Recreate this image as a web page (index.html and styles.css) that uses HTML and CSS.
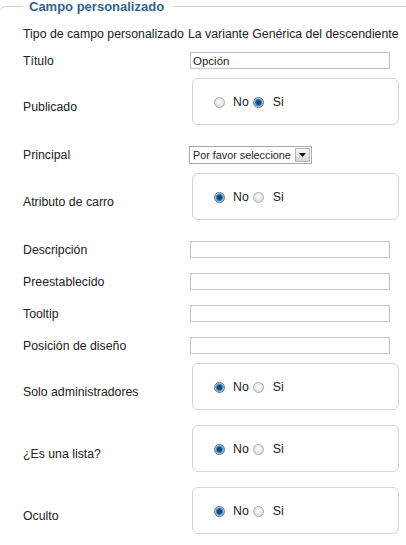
FILE: index.html
```html
<!DOCTYPE html>
<html lang="es">
<head>
  <meta charset="UTF-8">
  <title>Campo personalizado</title>
  <link rel="stylesheet" href="styles.css">
</head>
<body>

  <fieldset class="panel">
    <legend>Campo personalizado</legend>
    <div class="rows">

      <div class="row row-info">
        <span class="label">Tipo de campo personalizado</span>
        <span class="value">La variante Genérica del descendiente</span>
      </div>

      <div class="row">
        <label class="label" for="titulo">Título</label>
        <input class="text" id="titulo" value="Opción">
      </div>

      <div class="row row-radio">
        <span class="label">Publicado</span>
        <div class="choice">
          <input type="radio" name="publicado" id="pub0"><label for="pub0">No</label>
          <input type="radio" name="publicado" id="pub1" checked><label for="pub1">Si</label>
        </div>
      </div>

      <div class="row">
        <span class="label">Principal</span>
        <div class="select">
          <span>Por favor seleccione</span>
          <span class="arrow">
            <svg width="7" height="4" viewBox="0 0 7 4"><path d="M0 0h7L3.5 4z" fill="#111"/></svg>
          </span>
        </div>
      </div>

      <div class="row row-radio">
        <span class="label">Atributo de carro</span>
        <div class="choice">
          <input type="radio" name="carro" id="car0" checked><label for="car0">No</label>
          <input type="radio" name="carro" id="car1"><label for="car1">Si</label>
        </div>
      </div>

      <div class="row">
        <label class="label" for="desc">Descripción</label>
        <input class="text" id="desc">
      </div>

      <div class="row">
        <label class="label" for="pre">Preestablecido</label>
        <input class="text" id="pre">
      </div>

      <div class="row">
        <label class="label" for="tip">Tooltip</label>
        <input class="text" id="tip">
      </div>

      <div class="row">
        <label class="label" for="pos">Posición de diseño</label>
        <input class="text" id="pos">
      </div>

      <div class="row row-radio">
        <span class="label">Solo administradores</span>
        <div class="choice">
          <input type="radio" name="admin" id="adm0" checked><label for="adm0">No</label>
          <input type="radio" name="admin" id="adm1"><label for="adm1">Si</label>
        </div>
      </div>

      <div class="row row-radio">
        <span class="label">¿Es una lista?</span>
        <div class="choice">
          <input type="radio" name="lista" id="lis0" checked><label for="lis0">No</label>
          <input type="radio" name="lista" id="lis1"><label for="lis1">Si</label>
        </div>
      </div>

      <div class="row row-radio">
        <span class="label">Oculto</span>
        <div class="choice">
          <input type="radio" name="oculto" id="ocu0" checked><label for="ocu0">No</label>
          <input type="radio" name="oculto" id="ocu1"><label for="ocu1">Si</label>
        </div>
      </div>

    </div>
  </fieldset>

</body>
</html>
```

FILE: styles.css
```css
body {
  margin: 0;
  overflow: hidden;
  font-family: "Liberation Sans", Arial, sans-serif;
  font-size: 12.3px;
  color: #222;
  background: #fff;
}
.panel {
  margin: -1px 0 0 -2px;
  width: 440px;
  min-height: 600px;
  padding: 12px 0 0 24px;
  border: 1px solid #cfcfcf;
  border-radius: 8px;
  box-sizing: border-box;
}
.panel legend {
  padding: 0 10px 0 6px;
  font-size: 13px;
  font-weight: bold;
  line-height: 15px;
  color: #2f6395;
}
.rows {
  display: flex;
  flex-direction: column;
  gap: 15px;
}
.row {
  display: flex;
  align-items: center;
}
.label {
  flex: none;
  width: 165px;
  line-height: 14px;
  white-space: nowrap;
}
.row-info {
  height: 16px;
  margin-bottom: -5px;
  white-space: nowrap;
}
.text {
  margin: 0 0 0 2px;
  width: 200px;
  height: 17px;
  box-sizing: border-box;
  border: 1px solid #c4c4c4;
  padding: 0 2px;
  font-family: "Liberation Sans", Arial, sans-serif;
  font-size: 11.5px;
  color: #222;
  outline: none;
}
.select {
  margin-left: 1px;
  width: 123px;
  height: 18px;
  box-sizing: border-box;
  border: 1px solid #a9a9a9;
  padding: 0 1px 0 3px;
  display: flex;
  align-items: center;
  font-size: 10.8px;
}
.select .arrow {
  margin-left: auto;
  width: 15px;
  height: 14px;
  box-sizing: border-box;
  border: 1px solid #b5b5b5;
  background: linear-gradient(#f6f6f6, #d6d6d6);
  display: flex;
  align-items: center;
  justify-content: center;
}
.row-radio {
  align-items: flex-start;
  margin-top: -6px;
}
.row-radio .label {
  margin-top: 22px;
}
.choice {
  margin: 0 0 6px 4px;
  width: 207px;
  height: 47px;
  box-sizing: border-box;
  border: 1px solid #d4d4d4;
  border-radius: 6px;
  padding: 1px 0 0 21px;
  display: flex;
  align-items: center;
}
.choice input {
  appearance: none;
  margin: 0 8px 0 0;
  width: 11px;
  height: 11px;
  border-radius: 50%;
  border: 1px solid #a3acb5;
  background: radial-gradient(circle at 50% 40%, #fff, #d2d2d2);
}
.choice input:checked {
  border-color: #5b7994;
  background: radial-gradient(circle, #17466f 0 2px, #3e7fbf 3px, #b3cfe9 4.5px);
}
.choice label + input {
  margin-left: 4px;
  margin-right: 9px;
}
```
